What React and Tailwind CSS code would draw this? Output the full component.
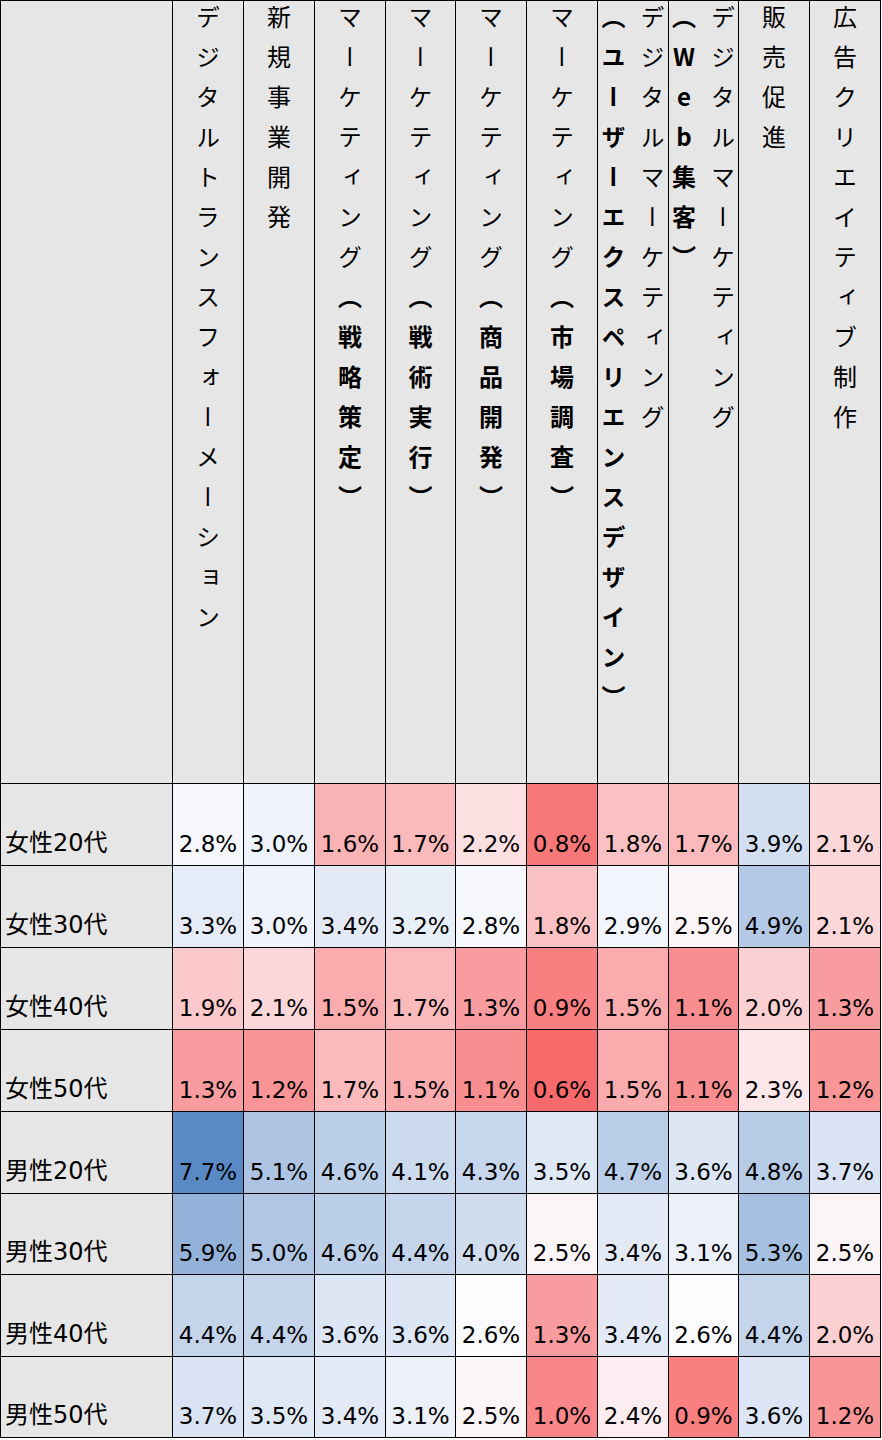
import React from "react";

// 属性別の構成比（ヒートマップ）
const rows = [
    { label: "女性20代", values: [2.8, 3.0, 1.6, 1.7, 2.2, 0.8, 1.8, 1.7, 3.9, 2.1] },
    { label: "女性30代", values: [3.3, 3.0, 3.4, 3.2, 2.8, 1.8, 2.9, 2.5, 4.9, 2.1] },
    { label: "女性40代", values: [1.9, 2.1, 1.5, 1.7, 1.3, 0.9, 1.5, 1.1, 2.0, 1.3] },
    { label: "女性50代", values: [1.3, 1.2, 1.7, 1.5, 1.1, 0.6, 1.5, 1.1, 2.3, 1.2] },
    { label: "男性20代", values: [7.7, 5.1, 4.6, 4.1, 4.3, 3.5, 4.7, 3.6, 4.8, 3.7] },
    { label: "男性30代", values: [5.9, 5.0, 4.6, 4.4, 4.0, 2.5, 3.4, 3.1, 5.3, 2.5] },
    { label: "男性40代", values: [4.4, 4.4, 3.6, 3.6, 2.6, 1.3, 3.4, 2.6, 4.4, 2.0] },
    { label: "男性50代", values: [3.7, 3.5, 3.4, 3.1, 2.5, 1.0, 2.4, 0.9, 3.6, 1.2] },
];

const headers = [
    { main: "デジタルトランスフォーメーション" },
    { main: "新規事業開発" },
    { main: "マーケティング", sub: "（戦略策定）" },
    { main: "マーケティング", sub: "（戦術実行）" },
    { main: "マーケティング", sub: "（商品開発）" },
    { main: "マーケティング", sub: "（市場調査）" },
    { main: "デジタルマーケティング", sub: "（ユーザーエクスペリエンスデザイン）", wrap: true },
    { main: "デジタルマーケティング", sub: "（Web集客）", wrap: true },
    { main: "販売促進" },
    { main: "広告クリエイティブ制作" },
];

// Excel風 3色スケール（赤 - 白 - 青, 中間値 = 中央値）
const RED = [248, 105, 107];
const WHITE = [252, 252, 255];
const BLUE = [90, 138, 198];

const all = rows.flatMap(r => r.values).sort((a, b) => a - b);
const min = all[0];
const max = all[all.length - 1];
const mid = (all[all.length / 2 - 1] + all[all.length / 2]) / 2;

const mix = (a, b, t) => a.map((c, i) => Math.round(c + (b[i] - c) * t));

const cellColor = (v) => {
    const rgb = v <= mid ? mix(RED, WHITE, (v - min) / (mid - min)) : mix(WHITE, BLUE, (v - mid) / (max - mid));
    return `rgb(${rgb[0]}, ${rgb[1]}, ${rgb[2]})`;
};

const gridCls = "grid w-[881px] grid-cols-[171px_70px_70px_70px_69px_70px_70px_70px_69px_70px_70px] grid-rows-[782px_81px_81px_81px_81px_81px_80px_81px_80px] gap-px bg-black p-px";
const headCell = "flex justify-center items-start overflow-visible bg-[#e7e6e6] pt-[4px]";
const verticalText = "[writing-mode:vertical-rl] [text-orientation:upright] text-[24px] leading-[39px] tracking-[16px] text-black font-[family-name:'Noto_Sans_CJK_JP',sans-serif]";
const labelCell = "flex items-end bg-[#e7e6e6] pl-[4px] pb-[8px] text-[24px] leading-[28px] text-black";
const dataCell = "flex items-end justify-center pb-[7px] text-[23px] leading-[28px] text-black";

export default function App() {
    return (
        <div className="bg-white font-[family-name:'DejaVu_Sans','Noto_Sans_CJK_JP',sans-serif]">
            <div className={gridCls}>
                {/* 見出し行 */}
                <div className="bg-[#e7e6e6]" />
                {headers.map((h, i) => (
                    <div key={i} className={headCell}>
                        <div className={verticalText}>
                            {h.main}
                            {h.wrap && <br />}
                            {h.sub && <span className="font-bold">{h.sub}</span>}
                        </div>
                    </div>
                ))}

                {/* データ行 */}
                {rows.map(r => (
                    <React.Fragment key={r.label}>
                        <div className={labelCell}>{r.label}</div>
                        {r.values.map((v, j) => (
                            <div key={j} className={dataCell} style={{ backgroundColor: cellColor(v) }}>
                                {v.toFixed(1)}%
                            </div>
                        ))}
                    </React.Fragment>
                ))}
            </div>
        </div>
    );
}
